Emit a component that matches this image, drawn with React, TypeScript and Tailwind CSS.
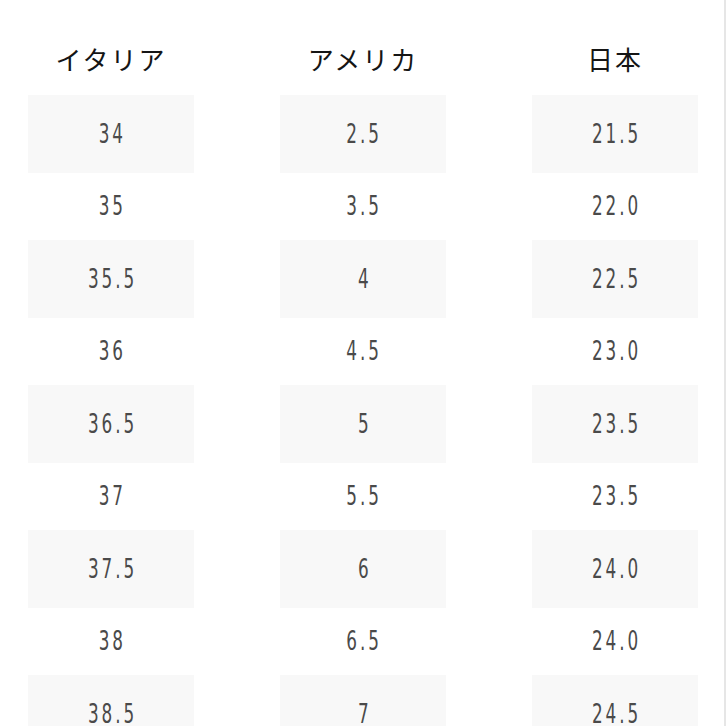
import React from "react";

// ─── Size data ────────────────────────────────────────────────────────────────
const rows: [string, string, string][] = [
  ["34", "2.5", "21.5"],
  ["35", "3.5", "22.0"],
  ["35.5", "4", "22.5"],
  ["36", "4.5", "23.0"],
  ["36.5", "5", "23.5"],
  ["37", "5.5", "23.5"],
  ["37.5", "6", "24.0"],
  ["38", "6.5", "24.0"],
  ["38.5", "7", "24.5"],
];

const headers = ["イタリア", "アメリカ", "日本"];

const numFont = {
  fontFamily: '"Liberation Sans Narrow", "DejaVu Sans Condensed", "Liberation Sans", sans-serif',
};
const jpFont = {
  fontFamily: '"Noto Sans CJK JP", "Noto Sans", sans-serif',
};

export default function App() {
  return (
    <div className="w-[726px] h-[726px] overflow-hidden bg-white border-r-2 border-[#e6e6e6]">
      <div className="pl-[28px] pt-[40px]">
        {/* header */}
        <div className="grid grid-cols-[166px_166px_166px] gap-x-[86px] mb-[19px]">
          {headers.map((h) => (
            <div
              key={h}
              className="h-[36px] flex items-center justify-center text-[26px] tracking-[2px] text-[#151515]"
              style={jpFont}
            >
              {h}
            </div>
          ))}
        </div>

        {/* rows */}
        {rows.map((r, i) => {
          const shaded = i % 2 === 0;
          return (
            <div
              key={i}
              className={`grid grid-cols-[166px_166px_166px] gap-x-[86px] ${shaded ? "h-[78px]" : "h-[67px]"}`}
            >
              {r.map((v, ci) => (
                <div
                  key={ci}
                  className={`flex items-center justify-center ${shaded ? "bg-[#f8f8f8]" : ""}`}
                >
                  <span
                    className="inline-block scale-x-[0.72] text-[26px] tracking-[4px] pl-[4px] font-extralight text-[#4a4a4a]"
                    style={numFont}
                  >
                    {v}
                  </span>
                </div>
              ))}
            </div>
          );
        })}
      </div>
    </div>
  );
}
